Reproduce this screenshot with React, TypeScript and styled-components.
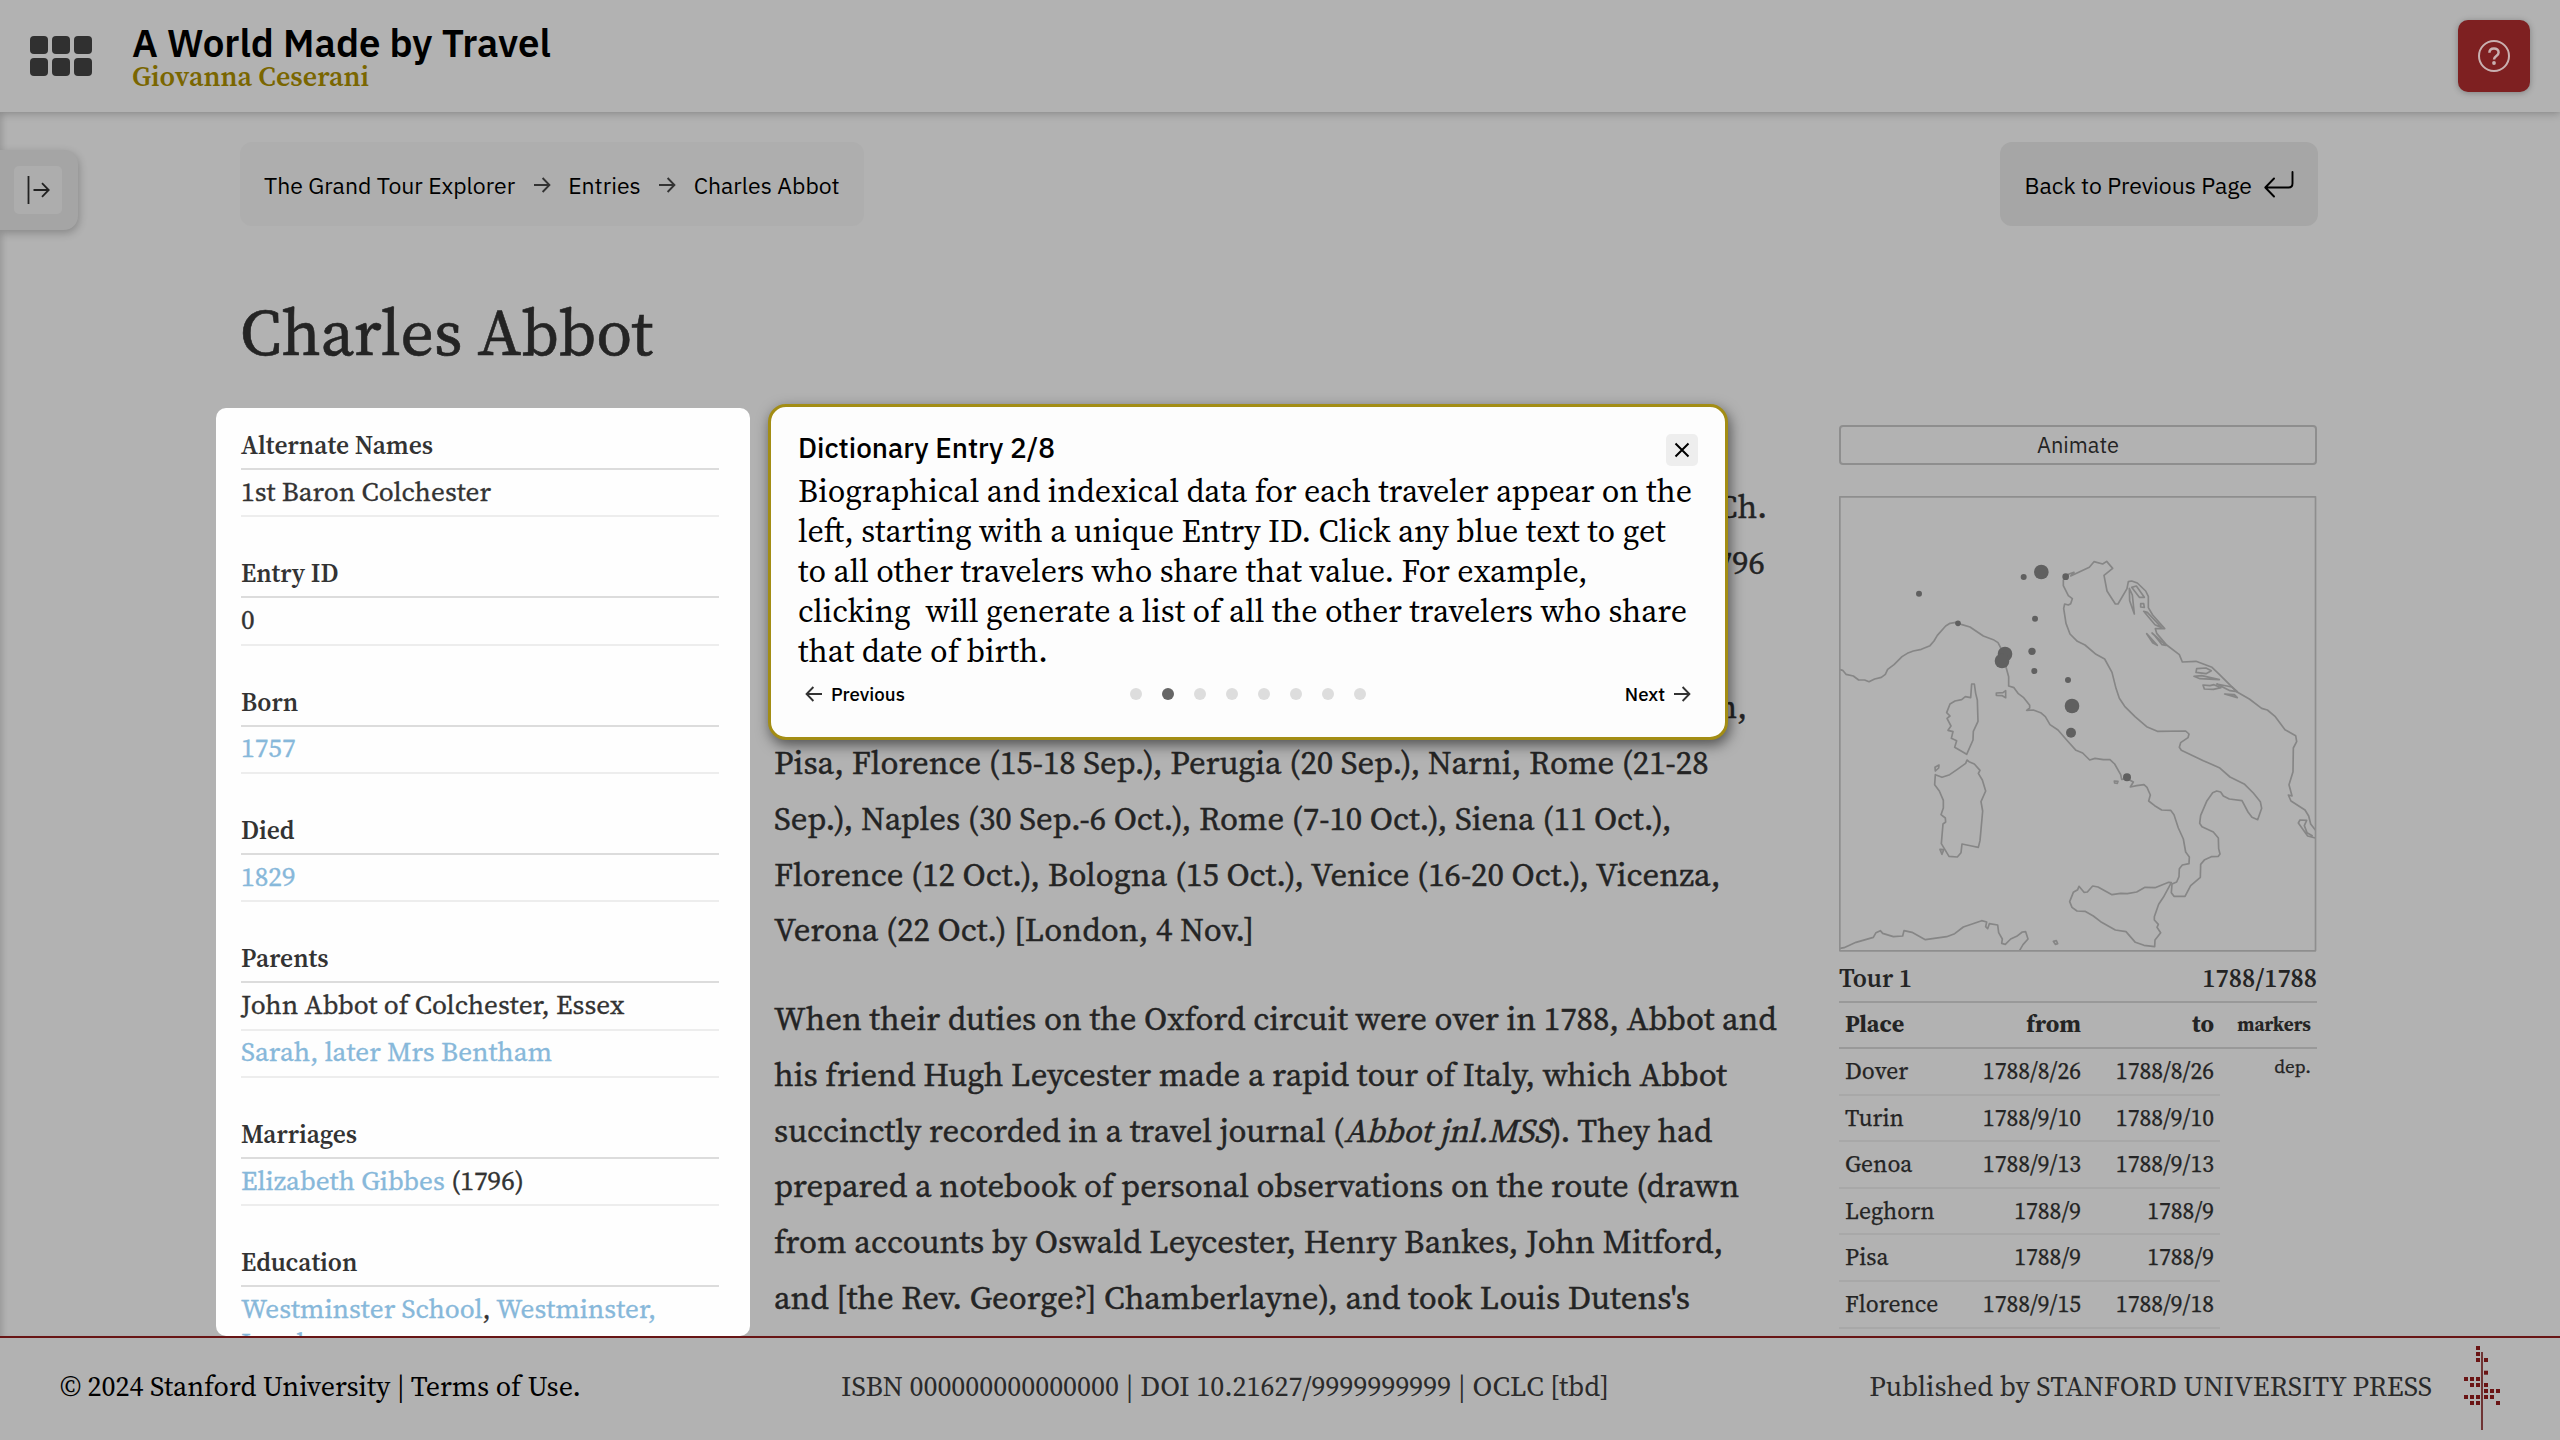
import React from 'react';
import styled, { createGlobalStyle } from 'styled-components';

const serif = `"Source Serif 4", "Source Serif Pro", "Liberation Serif", serif`;
const sans = `"IBM Plex Sans", Roboto, "Liberation Sans", sans-serif`;
const page = '#b2b2b2';
const ink = '#242424';

const GlobalStyle = createGlobalStyle`
  * { box-sizing: border-box; }
  body { margin: 0; background: ${page}; color: ${ink}; font-family: ${serif}; font-optical-sizing: none; }
  button { border: 0; padding: 0; margin: 0; color: inherit; background: none; }
  svg { display: block; flex: none; }
`;

const Page = styled.div`
  position: relative;
  display: grid;
  grid-template-rows: 112px 1224px 104px;
  width: 2560px;
  height: 1440px;
  overflow: hidden;
  background: ${page};
`;

/* Header */
const Header = styled.header`
  z-index: 1;
  display: flex;
  align-items: center;
  padding: 0 30px;
  background: ${page};
  box-shadow: 0 2px 8px rgba(0, 0, 0, 0.22);
`;
const MenuGrid = styled.button`
  display: grid;
  grid-template-columns: repeat(3, 18px);
  grid-auto-rows: 18px;
  gap: 4px;
`;
const MenuCell = styled.span`
  border-radius: 4px;
  background: #303030;
`;
const Brand = styled.div`
  display: flex;
  flex-direction: column;
  margin: 0 auto 0 40px;
  padding-top: 3px;
  white-space: nowrap;
`;
const BrandTitle = styled.div`
  font: 600 38.5px/36px ${sans};
  color: #000;
`;
const BrandAuthor = styled.div`
  margin-top: 1px;
  font: 600 28px/28px ${serif};
  color: #7a6600;
`;
const HelpButton = styled.button`
  display: grid;
  place-items: center;
  width: 72px;
  height: 72px;
  border-radius: 10px;
  background: #7e2021;
  box-shadow: 0 1px 6px rgba(0, 0, 0, 0.28);
`;

/* Body */
const Body = styled.div`
  display: flex;
  align-items: flex-start;
  height: 1224px;
  overflow: hidden;
  box-shadow: inset 6px 0 6px -4px rgba(0, 0, 0, 0.16);
`;
const Rail = styled.aside`
  display: flex;
  justify-content: flex-start;
  align-items: center;
  width: 78px;
  height: 80px;
  margin-top: 38px;
  padding-left: 14px;
  border-radius: 0 14px 14px 0;
  background: #a5a5a5;
  box-shadow: 1px 3px 8px rgba(0, 0, 0, 0.24);
`;
const RailButton = styled.button`
  display: grid;
  place-items: center;
  width: 48px;
  height: 48px;
  border-radius: 5px;
  background: #adadad;
`;
const Main = styled.main`
  width: 2102px;
  margin-left: 138px;
  padding-top: 30px;
`;
const TopBar = styled.div`
  display: flex;
  justify-content: space-between;
  padding-left: 24px;
  font: 400 23px/30px ${sans};
  color: #000;
`;
const Crumbs = styled.nav`
  display: flex;
  align-items: center;
  gap: 17.5px;
  height: 84px;
  padding: 2px 24px 0;
  border-radius: 12px;
  background: #aeaeae;
  white-space: nowrap;
`;
const BackButton = styled.button`
  display: flex;
  align-items: center;
  gap: 12px;
  height: 84px;
  padding: 2px 24px 0 25px;
  border-radius: 12px;
  background: #a6a6a6;
  font: inherit;
  white-space: nowrap;
`;
const Heading = styled.h1`
  margin: 66px 0 36px 24px;
  font: 400 65.6px/80px ${serif};
  -webkit-text-stroke: 0.6px currentColor;
`;
const Columns = styled.div`
  display: grid;
  grid-template-columns: 534px 1041px 478px;
  column-gap: 24px;
  align-items: start;
`;

/* Traveler facts */
const Facts = styled.section`
  display: flex;
  flex-direction: column;
  gap: 37px;
  height: 928px;
  padding: 18px 31px 0 25px;
  border-radius: 10px;
  overflow: hidden;
  background: #fefefe;
  color: #333;
`;
const FactTitle = styled.h2`
  margin: 0;
  padding-bottom: 2px;
  border-bottom: 2px solid #dcdcdc;
  font: 600 25.4px/40px ${serif};
`;
const FactValue = styled.div`
  padding: 4.75px 0 6.6px;
  border-bottom: 2px solid #ededed;
  font: 400 27.25px/34px ${serif};
  -webkit-text-stroke: 0.3px;
`;
const FactLink = styled.a`
  color: #87b8da;
`;

/* Narrative */
const Article = styled.article`
  padding-top: 71px;
`;
const Paragraph = styled.p`
  margin: 0 0 32.8px;
  font: 400 32.76px/55.8px ${serif};
  -webkit-text-stroke: 0.4px;
  white-space: nowrap;
`;
const Line = styled.span<{ $end?: number }>`
  display: block;
  height: 55.8px;
  ${p => (p.$end ? `width: ${p.$end}px; text-align: right;` : '')}
`;
const Slanted = styled.em`
  display: inline-block;
  font-style: normal;
  line-height: 1;
  transform: skewX(-14deg);
  transform-origin: 0 84%;
`;

/* Tour column */
const Tour = styled.section`
  width: 478px;
  padding-top: 17px;
`;
const AnimateButton = styled.button`
  display: block;
  width: 478px;
  height: 40px;
  margin-bottom: 31px;
  border: 2px solid #8e8e8e;
  border-radius: 4px;
  font: 400 21.8px/34px ${sans};
`;
const TourTitle = styled.div`
  display: flex;
  justify-content: space-between;
  height: 51px;
  padding-top: 5px;
  border-bottom: 2px solid #999;
  font: 600 25.4px/44px ${serif};
`;
const TourRow = styled.div<{ $head?: boolean }>`
  display: grid;
  grid-template-columns: 115px 133px 133px 97px;
  height: ${p => (p.$head ? 46 : 46.6)}px;
  ${p => (p.$head ? 'border-bottom: 2px solid #999;' : '')}
  font: ${p => (p.$head ? 700 : 400)} ${p => (p.$head ? 24 : 23.6)}px/${p => (p.$head ? 42 : 44)}px ${serif};
  -webkit-text-stroke: ${p => (p.$head ? 0 : 0.25)}px;
`;
const Cell = styled.span<{ $right?: boolean; $ruled?: boolean }>`
  padding: 0 6px;
  text-align: ${p => (p.$right ? 'right' : 'left')};
  ${p => (p.$ruled ? 'border-bottom: 2px solid #a8a8a8;' : '')}
`;
const Marker = styled.span<{ $head?: boolean }>`
  padding-right: 6px;
  text-align: right;
  font-size: 19px;
  line-height: ${p => (p.$head ? 43 : 35)}px;
`;

/* Walkthrough popup */
const Popup = styled.div`
  position: absolute;
  z-index: 2;
  left: 768px;
  top: 404px;
  width: 960px;
  height: 336px;
  padding: 21px 27px 0;
  border: 3px solid #a38d14;
  border-radius: 18px;
  background: #fdfdfd;
  color: #000;
  box-shadow: 2px 5px 14px rgba(0, 0, 0, 0.55);
`;
const PopupHead = styled.div`
  display: flex;
  justify-content: space-between;
  font: 500 27.9px/40px ${sans};
`;
const CloseButton = styled.button`
  display: grid;
  place-items: center;
  width: 32px;
  height: 32px;
  margin-top: 6px;
  border-radius: 5px;
  background: #eee;
`;
const PopupText = styled.p`
  margin: 3px 0 0;
  font: 400 32px/40px ${serif};
  white-space: pre;
`;
const PopupNav = styled.div`
  display: grid;
  grid-template-columns: 1fr auto 1fr;
  align-items: center;
  height: 24px;
  margin-top: 10px;
  padding: 0 7px;
`;
const NavButton = styled.button<{ $end?: boolean }>`
  display: flex;
  align-items: center;
  gap: 8px;
  justify-self: ${p => (p.$end ? 'end' : 'start')};
  font: 500 18.7px/26px ${sans};
`;
const Dots = styled.div`
  display: flex;
  gap: 20px;
`;
const Dot = styled.span<{ $active: boolean }>`
  width: 12px;
  height: 12px;
  border-radius: 50%;
  background: ${p => (p.$active ? '#666' : '#ddd')};
`;

/* Footer */
const Footer = styled.footer`
  z-index: 1;
  display: flex;
  justify-content: space-between;
  align-items: center;
  padding: 0 58px 0 60px;
  border-top: 2px solid #681515;
  background: ${page};
  font: 400 27.95px/36px ${serif};
  white-space: nowrap;
`;
const FooterText = styled.span<{ $dark?: boolean }>`
  padding-bottom: 6px;
  color: ${p => (p.$dark ? '#000' : '#2a2a2a')};
`;
const Publisher = styled.div`
  display: flex;
  align-items: center;
  gap: 32px;
`;

const Arrow = ({ flip = false, color = '#333' }: { flip?: boolean; color?: string }) => (
  <svg width="18" height="18" viewBox="0 0 18 18" fill="none" stroke={color} strokeWidth="1.9"
    transform={flip ? 'scale(-1 1)' : undefined}>
    <path d="M1 9H16.2M9.6 2L16.4 9L9.6 16" />
  </svg>
);

type Part = string | { link: string };
const facts: { title: string; values: Part[][] }[] = [
  { title: 'Alternate Names', values: [['1st Baron Colchester']] },
  { title: 'Entry ID', values: [['0']] },
  { title: 'Born', values: [[{ link: '1757' }]] },
  { title: 'Died', values: [[{ link: '1829' }]] },
  { title: 'Parents', values: [['John Abbot of Colchester, Essex'], [{ link: 'Sarah, later Mrs Bentham' }]] },
  { title: 'Marriages', values: [[{ link: 'Elizabeth Gibbes' }, ' (1796)']] },
  { title: 'Education', values: [[{ link: 'Westminster School' }, ', ', { link: 'Westminster, London' }]] },
];

const stops = [
  ['Dover', '1788/8/26', '1788/8/26', 'dep.'],
  ['Turin', '1788/9/10', '1788/9/10', ''],
  ['Genoa', '1788/9/13', '1788/9/13', ''],
  ['Leghorn', '1788/9', '1788/9', ''],
  ['Pisa', '1788/9', '1788/9', ''],
  ['Florence', '1788/9/15', '1788/9/18', ''],
];

const cities = [
  [664, 276, 22], [611, 291, 9], [737, 290, 10], [297, 341, 9], [414, 430, 8.5], [645, 416, 9], [555, 522, 22],
  [546, 543, 22], [636, 514, 11], [643, 573, 9], [744, 600, 9], [756, 678, 22], [753, 758, 15], [921, 892, 12],
];

const coast = [
  // Ligurian, Tyrrhenian and Adriatic shore
  'M60 569L68 571L78 583L100 588L116 600L134 600L147 605L164 597L184 592L196 583L203 568L222 554L246 530L262 520L280 513L304 508L330 497L342 483L352 466L377 438L390 430L408 427L426 434L450 441L490 468L520 479L534 488L543 505L550 540L559 565L566 590L566 618L582 623L595 641L610 652L629 676L629 684L620 691L640 690L662 698L676 710L690 734L714 750L740 780L768 811L788 819L809 840L825 835L850 839L870 839L884 852L902 884L905 898L922 896L940 906L931 921L950 917L972 914L981 922L991 945L986 963L1004 977L1025 990L1052 991L1062 1004L1075 1044L1090 1077L1097 1116L1108 1131L1107 1151L1087 1155L1078 1166L1077 1190L1070 1206L1056 1212L1054 1238L1062 1249L1095 1249L1112 1217L1141 1192L1142 1153L1154 1139L1174 1130L1195 1129L1200 1122L1196 1106L1195 1074L1180 1056L1146 1040L1139 1030L1142 1006L1160 964L1178 938L1190 933L1202 936L1210 948L1228 957L1266 962L1284 996L1296 1012L1313 1019L1325 985L1321 965L1300 939L1274 913L1230 891L1198 863L1150 842L1084 811L1078 802L1082 788L1104 773L1107 762L1097 753L1012 754L980 740L945 710L914 679L898 655L888 625L876 577L854 537L828 523L795 495L772 484L750 462L738 430L731 385L734 372L745 375L752 371L757 356L745 347L730 317L730 300L745 283L762 277L752 288L808 262L822 245L848 252L860 244L878 265L852 286L861 333L886 372L894 372L921 326L925 305L935 303L952 309L977 333L985 349L985 383L998 405L1034 446L1006 446L1010 460L1040 495L1078 524L1087 546L1128 544L1176 562L1198 583L1250 635L1288 657L1325 685L1342 690L1366 710L1395 749L1427 767L1430 785L1420 804L1419 875L1407 914L1416 948L1405 945L1413 963L1455 990L1466 1008L1472 1032L1486 1050',
  // Istrian and Dalmatian islands
  'M928 325L937 345L943 402L929 362Z', 'M935 322L949 318L973 352L958 352Z', 'M962 371L971 371L973 382L962 381Z', 'M971 394L982 397L1025 443L1005 434Z',
  'M980 461L1012 496L998 488Z', 'M996 459L1038 496L1026 494L1005 468Z', 'M1130 566L1158 564L1174 572L1158 581L1128 577Z', 'M1122 589L1145 587L1198 599L1140 596Z',
  'M1149 615L1170 617L1182 614L1203 623L1180 628L1153 627Z', 'M1190 612L1236 621L1252 635L1230 632Z', 'M1214 642L1243 644L1252 653Z',
  'M1486 1074L1463 1068L1435 1029L1440 1020L1460 1021L1453 1037L1461 1058L1478 1068',
  // Elba, Corsica, Sardinia
  'M529 639L549 638L557 632L557 653L547 647L529 646Z',
  'M455 612L463 612L467 640L472 660L474 724L460 754L459 780L440 823L404 802L410 782L394 775L399 755L384 751L393 738L381 715L390 708L380 698L390 672L405 663L425 659L436 650L452 653Z',
  'M437 850L441 840L447 845L463 852L480 871L475 880L487 900L497 933L483 965L488 993L480 1082L475 1102L455 1098L426 1092L423 1118L412 1131L387 1129L364 1091L369 1032L377 1026L376 1014L363 1004L370 984L370 961L358 933L344 914L346 884L366 892L389 884L412 868Z',
  'M346 873L345 862L357 855L356 864Z', 'M360 1108L371 1109L366 1123Z', 'M883 903L894 904L892 910L884 909Z',
  // Sicily and its neighbours
  'M1054 1208L1030 1252L1016 1273L1003 1310L1003 1320L1015 1333L1011 1342L1022 1358L1005 1380L1004 1400L972 1396L946 1387L918 1355L886 1350L842 1325L820 1308L795 1294L771 1293L756 1282L749 1265L760 1237L773 1229L777 1219L792 1237L802 1236L818 1218L834 1221L876 1244L902 1240L922 1241L950 1236L975 1222L1005 1223L1046 1207Z',
  'M700 1384L709 1382L713 1391L706 1393Z',
  // North Africa
  'M60 1405L72 1403L108 1387L160 1372L168 1358L181 1352L188 1360L220 1370L248 1368L252 1352L276 1357L316 1379L380 1370L404 1361L430 1341L485 1322L500 1326L497 1340L503 1346L508 1331L533 1335L536 1358L547 1377L545 1390L556 1393L572 1377L590 1369L607 1356L617 1355L624 1377L609 1394L599 1411',
];

const TourMap = () => (
  <svg width="478" height="456" viewBox="57 48 1434 1368" fill="none" stroke="#868686" strokeWidth="5" strokeLinejoin="round">
    {coast.map(d => <path key={d.slice(0, 14)} d={d} />)}
    {cities.map(([x, y, r]) => <circle key={`${x}-${y}`} cx={x} cy={y} r={r} fill="#606060" stroke="none" />)}
    <rect x="59.5" y="50.5" width="1427" height="1362" stroke="#8e8e8e" strokeWidth="5" />
  </svg>
);

const pressMark = [
  [12, 0], [12, 6], [12, 12], [20, 12], [20, 24.7], [0, 31], [6, 31], [12, 31], [6, 37], [12, 37], [20, 37],
  [20, 43], [26, 43], [32, 43], [0, 49], [6, 49], [12, 49], [20, 49], [26, 49], [6, 55], [12, 55], [32, 55],
];

export default function App() {
  return (
    <Page>
      <GlobalStyle />
      <Header>
        <MenuGrid>{[0, 1, 2, 3, 4, 5].map(i => <MenuCell key={i} />)}</MenuGrid>
        <Brand>
          <BrandTitle>A World Made by Travel</BrandTitle>
          <BrandAuthor>Giovanna Ceserani</BrandAuthor>
        </Brand>
        <HelpButton>
          <svg width="34" height="34" viewBox="0 0 34 34" fill="none" stroke="#c9b0b0" strokeWidth="2">
            <circle cx="17" cy="17" r="15" />
            <path d="M12.4 13.8C12.4 11 14.4 9.4 17 9.4S21.6 11 21.6 13.5C21.6 17 17 16.8 17 20.4" strokeWidth="2.5" />
            <circle cx="17" cy="24" r="1.9" fill="#c9b0b0" stroke="none" />
          </svg>
        </HelpButton>
      </Header>

      <Body>
        <Rail>
          <RailButton>
            <svg width="24" height="30" viewBox="0.5 0 24 30" fill="none" stroke="#222" strokeWidth="1.8">
              <path d="M3 1V29M8 15H23M16.5 8.2L23.2 15L16.5 21.8" />
            </svg>
          </RailButton>
        </Rail>
        <Main>
          <TopBar>
            <Crumbs>
              <span>The Grand Tour Explorer</span>
              <Arrow />
              <span>Entries</span>
              <Arrow />
              <span>Charles Abbot</span>
            </Crumbs>
            <BackButton>
              Back to Previous Page
              <svg width="30" height="28" viewBox="0 0 30 28" fill="none" stroke="#000" strokeWidth="1.9" strokeLinecap="round" strokeLinejoin="round">
                <path d="M28.5 1V12.5Q28.5 16.5 24.5 16.5H1.5M10 7.5L1.3 16.5L10 25.5" />
              </svg>
            </BackButton>
          </TopBar>
          <Heading>Charles Abbot</Heading>
          <Columns>
            <Facts>
              {facts.map(f => (
                <div key={f.title}>
                  <FactTitle>{f.title}</FactTitle>
                  {f.values.map((parts, i) => (
                    <FactValue key={i}>
                      {parts.map((p, j) => (typeof p === 'string' ? p : <FactLink key={j}>{p.link}</FactLink>))}
                    </FactValue>
                  ))}
                </div>
              ))}
            </Facts>
            <Article>
              <Paragraph>
                <Line $end={993}>Ch.</Line>
                <Line $end={991}>1796</Line>
              </Paragraph>
              <Paragraph>
                <Line />
                <Line $end={973}>Milan,</Line>
                <Line>Pisa, Florence (15-18 Sep.), Perugia (20 Sep.), Narni, Rome (21-28</Line>
                <Line>Sep.), Naples (30 Sep.-6 Oct.), Rome (7-10 Oct.), Siena (11 Oct.),</Line>
                <Line>Florence (12 Oct.), Bologna (15 Oct.), Venice (16-20 Oct.), Vicenza,</Line>
                <Line>Verona (22 Oct.) [London, 4 Nov.]</Line>
              </Paragraph>
              <Paragraph>
                <Line>When their duties on the Oxford circuit were over in 1788, Abbot and</Line>
                <Line>his friend Hugh Leycester made a rapid tour of Italy, which Abbot</Line>
                <Line>succinctly recorded in a travel journal (<Slanted>Abbot jnl.MSS</Slanted>). They had</Line>
                <Line>prepared a notebook of personal observations on the route (drawn</Line>
                <Line>from accounts by Oswald Leycester, Henry Bankes, John Mitford,</Line>
                <Line>and [the Rev. George?] Chamberlayne), and took Louis Dutens's</Line>
              </Paragraph>
            </Article>
            <Tour>
              <AnimateButton>Animate</AnimateButton>
              <TourMap />
              <TourTitle><span>Tour 1</span><span>1788/1788</span></TourTitle>
              <TourRow $head>
                <Cell>Place</Cell>
                <Cell $right>from</Cell>
                <Cell $right>to</Cell>
                <Marker $head>markers</Marker>
              </TourRow>
              {stops.map(([place, from, to, marker]) => (
                <TourRow key={place}>
                  <Cell $ruled>{place}</Cell>
                  <Cell $ruled $right>{from}</Cell>
                  <Cell $ruled $right>{to}</Cell>
                  <Marker>{marker}</Marker>
                </TourRow>
              ))}
            </Tour>
          </Columns>
        </Main>
      </Body>

      <Footer>
        <FooterText $dark>© 2024 Stanford University | Terms of Use.</FooterText>
        <FooterText>ISBN 000000000000000 | DOI 10.21627/9999999999 | OCLC [tbd]</FooterText>
        <Publisher>
          <FooterText>Published by STANFORD UNIVERSITY PRESS</FooterText>
          <svg width="38" height="86" viewBox="0 0 38 86">
            {pressMark.map(([x, y]) => <rect key={`${x}-${y}`} x={x} y={y} width="4" height="4" fill="#6a1414" />)}
            <rect x="17" y="6" width="2" height="78" fill="#6f3434" />
          </svg>
        </Publisher>
      </Footer>

      <Popup>
        <PopupHead>
          Dictionary Entry 2/8
          <CloseButton>
            <svg width="16" height="16" viewBox="0 0 16 16" stroke="#000" strokeWidth="2"><path d="M1.5 1.5L14.5 14.5M14.5 1.5L1.5 14.5" /></svg>
          </CloseButton>
        </PopupHead>
        <PopupText>{`Biographical and indexical data for each traveler appear on the
left, starting with a unique Entry ID. Click any blue text to get
to all other travelers who share that value. For example,
clicking  will generate a list of all the other travelers who share
that date of birth.`}</PopupText>
        <PopupNav>
          <NavButton><Arrow flip />Previous</NavButton>
          <Dots>{[0, 1, 2, 3, 4, 5, 6, 7].map(i => <Dot key={i} $active={i === 1} />)}</Dots>
          <NavButton $end>Next<Arrow /></NavButton>
        </PopupNav>
      </Popup>
    </Page>
  );
}
